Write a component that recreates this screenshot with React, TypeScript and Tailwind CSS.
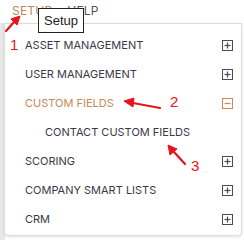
import React from "react";

const items = [
  { label: "ASSET MANAGEMENT", open: false },
  { label: "USER MANAGEMENT", open: false },
  { label: "CUSTOM FIELDS", open: true },
  { label: "CONTACT CUSTOM FIELDS", child: true },
  { label: "SCORING", open: false },
  { label: "COMPANY SMART LISTS", open: false },
  { label: "CRM", open: false },
];

function BoxIcon({ open }: { open?: boolean }) {
  const c = open ? "#c98a55" : "#4a4a5a";
  return (
    <svg width="11" height="11" viewBox="0 0 11 11">
      <rect x="0.5" y="0.5" width="10" height="10" fill="none" stroke={c} strokeWidth="1" />
      <path d="M2.5 5.5h6" stroke={c} strokeWidth="1.2" />
      {!open && <path d="M5.5 2.5v6" stroke={c} strokeWidth="1.2" />}
    </svg>
  );
}

export default function App() {
  return (
    <div className="relative w-[244px] h-[240px] overflow-hidden bg-white font-['Inter',sans-serif]">
      {/* top nav */}
      <div className="h-[23px] flex items-start gap-[15px] pl-[12px] pt-[2px] text-[12px] tracking-[0.2px]">
        <span className="text-[#b8875a]">SETUP</span>
        <span className="text-[#555]">HELP</span>
      </div>
      <div className="w-[5px] h-[217px] bg-[#e8e8e8]" />

      {/* dropdown */}
      <div className="absolute left-[4px] top-[23px] w-[238px] h-[213px] bg-white border border-[#dcdcdc] rounded-b-[4px] shadow-[0_1px_3px_rgba(0,0,0,0.12)] pt-[7px]">
        {items.map((it) => (
          <div
            key={it.label}
            className={`h-[29px] flex items-center justify-between pr-[8px] text-[11px] ${
              it.child ? "pl-[40px]" : "pl-[20px]"
            } ${it.open ? "text-[#c58a58]" : "text-[#3a3a48]"}`}
          >
            <span>{it.label}</span>
            {!it.child && <BoxIcon open={it.open} />}
          </div>
        ))}
      </div>

      {/* tooltip */}
      <div className="absolute left-[38px] top-[8px] w-[46px] h-[25px] border border-[#222] bg-white flex items-center justify-center text-[13px] text-[#222] font-['Liberation_Sans',sans-serif]">
        Setup
      </div>

      {/* annotations */}
      <span className="absolute left-[10px] top-[37px] text-[15px] leading-none text-[#e8141c] font-['Liberation_Sans',sans-serif]">1</span>
      <span className="absolute left-[170px] top-[94px] text-[15px] leading-none text-[#e8141c] font-['Liberation_Sans',sans-serif]">2</span>
      <span className="absolute left-[191px] top-[158px] text-[15px] leading-none text-[#e8141c] font-['Liberation_Sans',sans-serif]">3</span>
      <svg className="absolute left-0 top-0" width="244" height="240" viewBox="0 0 244 240">
        <g fill="#e8141c" stroke="#e8141c">
          <path d="M6 31 L15 21" strokeWidth="2.2" strokeLinecap="round" />
          <path d="M20 16 L11 19 L17 25 Z" strokeWidth="1" />
          <path d="M160 108 L133 103" strokeWidth="2.2" strokeLinecap="round" />
          <path d="M124 101 L134 98 L133 107 Z" strokeWidth="1" />
          <path d="M185 164 L174 152" strokeWidth="2.2" strokeLinecap="round" />
          <path d="M168 145 L170 155 L177 149 Z" strokeWidth="1" />
        </g>
      </svg>
    </div>
  );
}
